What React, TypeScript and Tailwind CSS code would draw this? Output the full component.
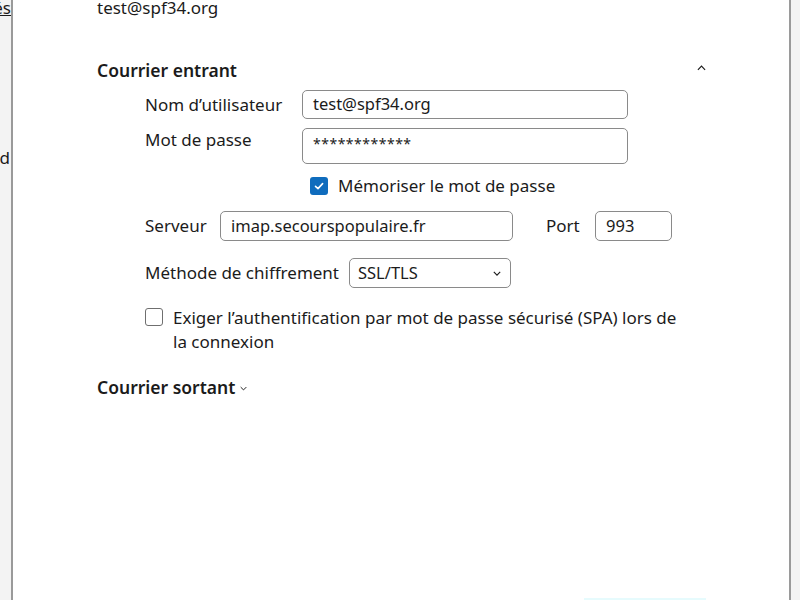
import React from 'react';

const font = { fontFamily: '"Noto Sans", "Open Sans", sans-serif' };

const Check: React.FC<{ checked: boolean }> = ({ checked }) =>
  checked ? (
    <span className="w-[18px] h-[18px] rounded-[3px] bg-[#0f6cbd] flex items-center justify-center shrink-0">
      <svg viewBox="0 0 12 12" className="w-[12px] h-[12px]" fill="none" stroke="white" strokeWidth={1.6} strokeLinecap="round" strokeLinejoin="round">
        <path d="M2.5 6.3 L5 8.6 L9.6 3.6" />
      </svg>
    </span>
  ) : (
    <span className="block w-[18px] h-[18px] rounded-[3px] border border-[#6f6f6f] bg-white shrink-0" />
  );

const Field: React.FC<{ value: string; w: string; h?: string; top?: boolean }> = ({ value, w, h = 'h-[30px]', top }) => (
  <div className={`${w} ${h} border border-[#8a8a8a] rounded-[5px] px-[10px] flex ${top ? 'items-start pt-[4px] text-[14px] tracking-[0.5px]' : 'items-center text-[16.5px]'} text-[#1b1b1b] shrink-0`}>
    {value}
  </div>
);

export default function App() {
  return (
    <div className="flex w-[800px] h-[600px] overflow-hidden bg-white text-[#1b1b1b]" style={font}>
      {/* left window behind */}
      <div className="w-[11px] h-full bg-[#f3f3f3] overflow-hidden flex flex-col items-end text-[17px] shrink-0">
        <span className="underline mt-[-5px] whitespace-nowrap">és</span>
        <span className="mt-[124px] whitespace-nowrap pr-[1px]">d</span>
      </div>
      <div className="w-[2px] h-full bg-[#9a9a9a] shrink-0" />

      {/* dialog */}
      <div className="flex-1 h-full bg-white pl-[84px] relative text-[17px]">
        <div className="leading-[22px] mt-[-3px]">test@spf34.org</div>

        <div className="flex items-center justify-between w-[609px] h-[24px] mt-[39px]">
          <span className="text-[17.5px] font-semibold">Courrier entrant</span>
          <svg viewBox="0 0 10 6" className="w-[9px] h-[6px] mb-[4px]" fill="none" stroke="#1b1b1b" strokeWidth={1.3}>
            <path d="M1 5 L5 1 L9 5" />
          </svg>
        </div>

        <div className="pl-[48px]">
          <div className="flex items-center h-[29px] mt-[8px]">
            <span className="w-[157px] shrink-0">Nom d’utilisateur</span>
            <Field value="test@spf34.org" w="w-[326px]" h="h-[29px]" />
          </div>
          <div className="flex items-start mt-[9px]">
            <span className="w-[157px] shrink-0 leading-[24px]">Mot de passe</span>
            <Field value="************" w="w-[326px]" h="h-[36px]" top />
          </div>
          <div className="flex items-center h-[22px] mt-[11px] ml-[165px] gap-[10px]">
            <Check checked />
            <span>Mémoriser le mot de passe</span>
          </div>
          <div className="flex items-center h-[30px] mt-[14px]">
            <span className="w-[75px] shrink-0">Serveur</span>
            <Field value="imap.secourspopulaire.fr" w="w-[293px]" />
            <span className="ml-[33px] w-[49px] shrink-0">Port</span>
            <Field value="993" w="w-[77px]" />
          </div>
          <div className="flex items-center h-[30px] mt-[17px]">
            <span className="w-[204px] shrink-0">Méthode de chiffrement</span>
            <div className="w-[162px] h-[30px] border border-[#8a8a8a] rounded-[5px] pl-[8px] pr-[9px] flex items-center justify-between text-[16.5px]">
              <span>SSL/TLS</span>
              <svg viewBox="0 0 10 6" className="w-[8px] h-[5px]" fill="none" stroke="#1b1b1b" strokeWidth={1.4}>
                <path d="M1 1 L5 5 L9 1" />
              </svg>
            </div>
          </div>
          <div className="flex items-start mt-[18px] gap-[10px]">
            <span className="mt-[2px]"><Check checked={false} /></span>
            <span className="w-[512px] leading-[24px]">
              Exiger l’authentification par mot de passe sécurisé (SPA) lors de la connexion
            </span>
          </div>
        </div>

        <div className="flex items-center gap-[5px] h-[24px] mt-[21px]">
          <span className="text-[17.5px] font-semibold">Courrier sortant</span>
          <svg viewBox="0 0 10 6" className="w-[7px] h-[5px] mt-[2px]" fill="none" stroke="#1b1b1b" strokeWidth={1.4}>
            <path d="M1 1 L5 5 L9 1" />
          </svg>
        </div>

        {/* faint button edge at the bottom */}
        <div className="absolute left-[571px] bottom-0 w-[122px] h-[2px] bg-[#e6fbfd]" />
      </div>

      <div className="w-[2px] h-full bg-[#9a9a9a] shrink-0" />
      <div className="w-[9px] h-full bg-[#f3f3f3] shrink-0" />
    </div>
  );
}
